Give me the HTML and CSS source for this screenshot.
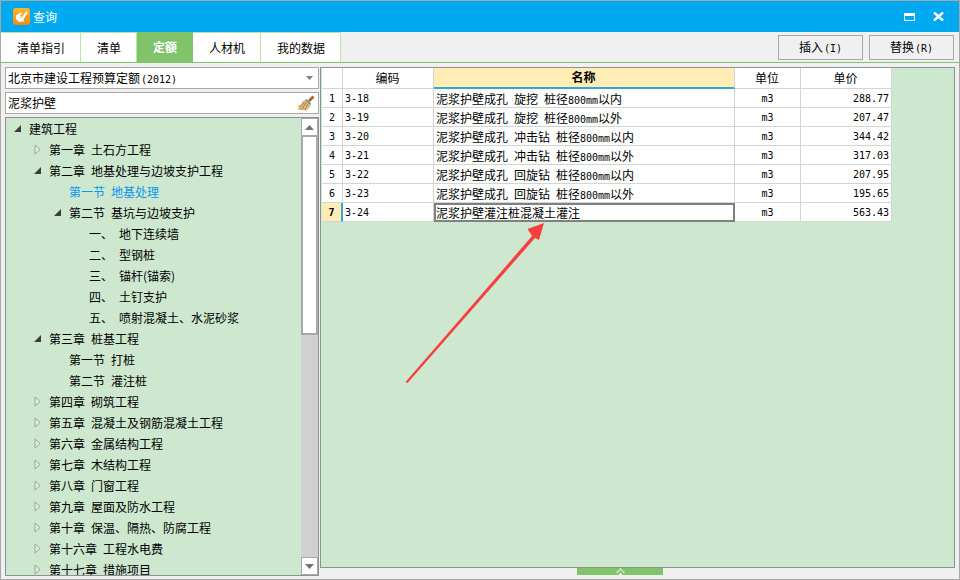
FILE: index.html
```html
<!DOCTYPE html>
<html lang="zh-CN">
<head>
<meta charset="utf-8">
<title>查询</title>
<link rel="stylesheet" href="styles.css">
</head>
<body>
<div class="win">
  <header class="titlebar">
    <svg class="app-icon" width="17" height="17" viewBox="0 0 17 17">
      <defs><linearGradient id="og" x1="0" y1="0" x2="0" y2="1"><stop offset="0" stop-color="#ffb52e"/><stop offset="1" stop-color="#f08a12"/></linearGradient></defs>
      <rect width="17" height="17" rx="3" fill="url(#og)"/>
      <path d="M3 7.5 L7.5 4.5 L10 5 L7 7.5 L9.5 8.5 L13.5 3 L15 4.5 L10.5 11 L11 13.5 L6 14 L3 11 Z" fill="#fff"/>
      <path d="M7 10 L10 7.5" stroke="#f6a523" stroke-width="1" fill="none"/>
    </svg>
    <span class="title-text">查询</span>
    <span class="win-ctrls">
      <svg width="11" height="8" viewBox="0 0 11 8"><path d="M0 0H11V8H0Z M1 3V7H10V3Z" fill="#fff" fill-rule="evenodd"/></svg>
      <svg width="11" height="9" viewBox="0 0 11 9"><path d="M1 0.5 L10 8.5 M10 0.5 L1 8.5" stroke="#fff" stroke-width="2.4" fill="none"/></svg>
    </span>
  </header>

  <nav class="toolbar">
    <div class="tab">清单指引</div>
    <div class="tab">清单</div>
    <div class="tab active">定额</div>
    <div class="tab">人材机</div>
    <div class="tab">我的数据</div>
    <div class="tool-btns">
      <button class="btn">插入<span class="lat">(I)</span></button>
      <button class="btn">替换<span class="lat">(R)</span></button>
    </div>
  </nav>

  <main class="main">
    <section class="left">
      <div class="field combo">
        <span>北京市建设工程预算定额<span class="lat">(2012)</span></span>
        <svg width="7" height="4" viewBox="0 0 7 4"><path d="M0 0H7L3.5 4Z" fill="#7d7d85"/></svg>
      </div>
      <div class="field search">
        <span>泥浆护壁</span>
        <svg width="18" height="16" viewBox="0 0 18 16">
          <path d="M11 5 L15.5 0.5 L17.5 2.5 L13 7 Z" fill="#a9662c"/>
          <path d="M9.5 4 L14 8.5 L13 12 L9.5 15.5 L2 15 L0 13 L2.5 12.5 L0.5 11 L4 9.5 L6 6 Z" fill="#dcbc7c"/>
          <path d="M9 7 L5 14.5 M11 8.5 L8 15 M7 7 L3 12.5" stroke="#a07e48" stroke-width=".9" fill="none"/>
          <path d="M9.5 4 L14 8.5 L12.8 9.7 L8.3 5.2 Z" fill="#7f8f96"/>
        </svg>
      </div>
      <div class="tree-box">
        <div class="tree">
          <div class="node l0"><svg class="tw" viewBox="0 0 7 7"><path d="M0 7L7 0V7Z"/></svg>建筑工程</div>
          <div class="node l1"><svg class="tw closed" viewBox="0 0 7 11"><path d="M1 1L6 5.5L1 10Z"/></svg>第一章 土石方工程</div>
          <div class="node l1"><svg class="tw" viewBox="0 0 7 7"><path d="M0 7L7 0V7Z"/></svg>第二章 地基处理与边坡支护工程</div>
          <div class="node l2 current"><span class="slot"></span>第一节 地基处理</div>
          <div class="node l2"><svg class="tw" viewBox="0 0 7 7"><path d="M0 7L7 0V7Z"/></svg>第二节 基坑与边坡支护</div>
          <div class="node l3"><span class="slot"></span>一、 地下连续墙</div>
          <div class="node l3"><span class="slot"></span>二、 型钢桩</div>
          <div class="node l3"><span class="slot"></span>三、 锚杆(锚索)</div>
          <div class="node l3"><span class="slot"></span>四、 土钉支护</div>
          <div class="node l3"><span class="slot"></span>五、 喷射混凝土、水泥砂浆</div>
          <div class="node l1"><svg class="tw" viewBox="0 0 7 7"><path d="M0 7L7 0V7Z"/></svg>第三章 桩基工程</div>
          <div class="node l2"><span class="slot"></span>第一节 打桩</div>
          <div class="node l2"><span class="slot"></span>第二节 灌注桩</div>
          <div class="node l1"><svg class="tw closed" viewBox="0 0 7 11"><path d="M1 1L6 5.5L1 10Z"/></svg>第四章 砌筑工程</div>
          <div class="node l1"><svg class="tw closed" viewBox="0 0 7 11"><path d="M1 1L6 5.5L1 10Z"/></svg>第五章 混凝土及钢筋混凝土工程</div>
          <div class="node l1"><svg class="tw closed" viewBox="0 0 7 11"><path d="M1 1L6 5.5L1 10Z"/></svg>第六章 金属结构工程</div>
          <div class="node l1"><svg class="tw closed" viewBox="0 0 7 11"><path d="M1 1L6 5.5L1 10Z"/></svg>第七章 木结构工程</div>
          <div class="node l1"><svg class="tw closed" viewBox="0 0 7 11"><path d="M1 1L6 5.5L1 10Z"/></svg>第八章 门窗工程</div>
          <div class="node l1"><svg class="tw closed" viewBox="0 0 7 11"><path d="M1 1L6 5.5L1 10Z"/></svg>第九章 屋面及防水工程</div>
          <div class="node l1"><svg class="tw closed" viewBox="0 0 7 11"><path d="M1 1L6 5.5L1 10Z"/></svg>第十章 保温、隔热、防腐工程</div>
          <div class="node l1"><svg class="tw closed" viewBox="0 0 7 11"><path d="M1 1L6 5.5L1 10Z"/></svg>第十六章 工程水电费</div>
          <div class="node l1"><svg class="tw closed" viewBox="0 0 7 11"><path d="M1 1L6 5.5L1 10Z"/></svg>第十七章 措施项目</div>
        </div>
        <div class="scrollbar">
          <div class="sb-btn"><svg width="9" height="5" viewBox="0 0 9 5"><path d="M4.5 0L9 5H0Z" fill="#6f7378"/></svg></div>
          <div class="sb-thumb"></div>
          <div class="sb-track"></div>
          <div class="sb-btn"><svg width="9" height="5" viewBox="0 0 9 5"><path d="M0 0H9L4.5 5Z" fill="#6f7378"/></svg></div>
        </div>
      </div>
    </section>

    <section class="right">
      <div class="grid-box">
        <table class="grid">
          <colgroup><col class="c-idx"><col class="c-code"><col class="c-name"><col class="c-unit"><col class="c-price"></colgroup>
          <thead>
            <tr><th></th><th>编码</th><th class="sorted">名称</th><th>单位</th><th>单价</th></tr>
          </thead>
          <tbody>
            <tr><td class="idx lat">1</td><td class="lat code">3-18</td><td class="name">泥浆护壁成孔 旋挖 桩径<span class="lat">800mm</span>以内</td><td class="lat mid">m3</td><td class="lat num">288.77</td></tr>
            <tr><td class="idx lat">2</td><td class="lat code">3-19</td><td class="name">泥浆护壁成孔 旋挖 桩径<span class="lat">800mm</span>以外</td><td class="lat mid">m3</td><td class="lat num">207.47</td></tr>
            <tr><td class="idx lat">3</td><td class="lat code">3-20</td><td class="name">泥浆护壁成孔 冲击钻 桩径<span class="lat">800mm</span>以内</td><td class="lat mid">m3</td><td class="lat num">344.42</td></tr>
            <tr><td class="idx lat">4</td><td class="lat code">3-21</td><td class="name">泥浆护壁成孔 冲击钻 桩径<span class="lat">800mm</span>以外</td><td class="lat mid">m3</td><td class="lat num">317.03</td></tr>
            <tr><td class="idx lat">5</td><td class="lat code">3-22</td><td class="name">泥浆护壁成孔 回旋钻 桩径<span class="lat">800mm</span>以内</td><td class="lat mid">m3</td><td class="lat num">207.95</td></tr>
            <tr><td class="idx lat">6</td><td class="lat code">3-23</td><td class="name">泥浆护壁成孔 回旋钻 桩径<span class="lat">800mm</span>以外</td><td class="lat mid">m3</td><td class="lat num">195.65</td></tr>
            <tr class="sel"><td class="idx lat">7</td><td class="lat code">3-24</td><td class="name">泥浆护壁灌注桩混凝土灌注</td><td class="lat mid">m3</td><td class="lat num">563.43</td></tr>
          </tbody>
        </table>
      </div>
      <div class="handle">
        <svg width="9" height="7" viewBox="0 0 9 7"><path d="M0.5 5L4.5 1L8.5 5" stroke="#c8e8bc" stroke-width="1.6" fill="none"/><path d="M2.5 7L4.5 4.8L6.5 7Z" fill="#fff"/></svg>
      </div>
    </section>
  </main>

  <svg class="arrow" width="960" height="580" viewBox="0 0 960 580">
    <path d="M405.5 382 L532 236 L527.5 229 L544 223 L539 240 L535 238 L407.5 383 Z" fill="#f73f3f"/>
  </svg>
</div>
</body>
</html>
```
FILE: styles.css
```css
* { box-sizing: border-box; }
html, body { margin: 0; padding: 0; }
body { width: 960px; height: 580px; overflow: hidden; }

.win {
  position: relative;
  width: 960px;
  height: 580px;
  display: flex;
  flex-direction: column;
  border: 1px solid #a8a8a8;
  background: #f0f0f0;
  font: 12px/1 "Noto Sans CJK SC", "Liberation Sans", sans-serif;
  color: #000;
}
.lat { font-family: "DejaVu Sans Mono", "Liberation Mono", monospace; font-size: 10px; }

.titlebar {
  height: 31px;
  flex: none;
  display: flex;
  align-items: center;
  padding-left: 12px;
  background: #00a9f0;
  color: #fff;
}
.app-icon { margin-right: 3px; }
.title-text { font-size: 12px; }
.win-ctrls {
  margin-left: auto;
  margin-right: 15px;
  display: flex;
  align-items: center;
  gap: 18px;
}

.toolbar {
  height: 31px;
  flex: none;
  display: flex;
  border-bottom: 1px solid #80c36a;
  background: #f0f0f0;
}
.tab {
  display: flex;
  align-items: center;
  padding: 0 15px 0 16px;
  background: #fff;
  border-top: 1px solid #b7e6a8;
  border-right: 1px solid #b7e6a8;
}
.tab.active {
  padding: 0 16px;
  border: 0;
  background: #80c36a;
  color: #fff;
  font-weight: 700;
}
.tool-btns {
  margin-left: auto;
  display: flex;
  gap: 6px;
  padding: 3px 5px 2px 0;
}
.btn {
  width: 85px;
  height: 25px;
  padding: 0;
  border: 1px solid #a8a8a8;
  background: #f0f0f0;
  color: #000;
  font: inherit;
}
.btn .lat { margin-left: 1px; }

.main {
  flex: 1;
  min-height: 0;
  display: flex;
  gap: 1px;
  padding: 4px 4px 3px;
}

.left {
  width: 314px;
  flex: none;
  display: flex;
  flex-direction: column;
  gap: 3px;
}
.field {
  height: 22px;
  flex: none;
  display: flex;
  align-items: center;
  justify-content: space-between;
  padding-left: 2px;
  border: 1px solid #a8a8a8;
  background: #fff;
}
.combo { padding-right: 5px; }
.combo .lat { margin-left: 1px; }
.search { padding-right: 3px; }

.tree-box {
  flex: 1;
  min-height: 0;
  display: flex;
  border: 1px solid #8c9196;
  background: #cde8cf;
}
.tree { flex: 1; min-width: 0; overflow: hidden; }
.node {
  height: 21px;
  display: flex;
  align-items: center;
  white-space: nowrap;
  word-spacing: 3.3px;
}
.l0 { padding-left: 8px; }
.l1 { padding-left: 28px; }
.l2 { padding-left: 48px; }
.l3 { padding-left: 68px; }
.current { color: #0a96f0; }
.slot { width: 15px; flex: none; }
.tw { width: 7px; height: 7px; margin-right: 8px; flex: none; fill: #3c3c3c; }
.tw.closed { height: 11px; fill: #e4efe2; stroke: #9aa39a; stroke-width: 1; }

.scrollbar {
  width: 17px;
  flex: none;
  display: flex;
  flex-direction: column;
  background: #d0d0d0;
}
.sb-btn {
  height: 18px;
  flex: none;
  display: flex;
  align-items: center;
  justify-content: center;
  background: #fff;
  border: 1px solid #a8a8a8;
}
.sb-thumb { height: 199px; flex: none; background: #fff; border: 2px solid #a8a8a8; border-top-width: 1px; }
.sb-track { flex: 1; }

.right {
  flex: 1;
  min-width: 0;
  display: flex;
  flex-direction: column;
}
.grid-box {
  height: 501px;
  flex: none;
  border: 1px solid #8c9196;
  background: #cde8cf;
  padding-left: 1px;
}
.grid {
  width: 570px;
  table-layout: fixed;
  border-collapse: separate;
  border-spacing: 0;
  background: #fff;
}
.c-idx { width: 21px; }
.c-code { width: 91px; }
.c-name { width: 301px; }
.c-unit { width: 66px; }
.c-price { width: 91px; }
.grid th {
  height: 21px;
  padding: 0 1px 1px 0;
  font-weight: 400;
  border-right: 1px solid #d4d4d4;
  border-bottom: 1px solid #d4d4d4;
}
.grid th.sorted {
  background: #ffedb5;
  font-weight: 700;
  border-bottom: 2px solid #35a5dc;
}
.grid td {
  height: 19px;
  padding: 2px 0 0;
  border-right: 1px solid #d4d4d4;
  border-bottom: 1px solid #d4d4d4;
  white-space: nowrap;
  overflow: hidden;
}
.idx, .mid { text-align: center; }
.grid .code { padding-left: 2px; }
.grid .name { padding-left: 2px; word-spacing: 3.3px; }
.grid .num { text-align: right; padding-right: 2px; }
.sel .idx { background: #ffedb5; font-weight: 700; border-right: 2px solid #35a5dc; }
.grid .sel .name { border: 2px solid #808080; padding: 1px 0 0; }

.handle {
  width: 86px;
  height: 7px;
  flex: none;
  margin-left: 257px;
  display: flex;
  justify-content: center;
  background: #80c36a;
  overflow: hidden;
}

.arrow { position: absolute; left: -1px; top: -1px; pointer-events: none; }
```
